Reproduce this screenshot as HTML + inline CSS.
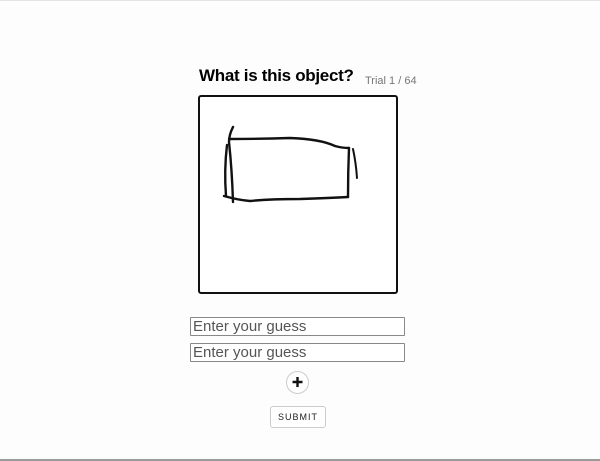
<!DOCTYPE html>
<html><head><meta charset="utf-8"><style>
html,body{margin:0;padding:0;}
body{width:600px;height:461px;background:#fdfdfd;position:relative;overflow:hidden;font-family:"Liberation Sans",sans-serif;}
.top{position:absolute;left:0;top:0;width:600px;height:1px;background:#e4e4e4;}
.bot{position:absolute;left:0;top:459px;width:600px;height:2px;background:#9a9a9a;}
h1{position:absolute;left:199px;top:66px;margin:0;font-size:17px;font-weight:bold;color:#000;letter-spacing:-0.3px;white-space:nowrap;}
.trial{position:absolute;left:365px;top:75px;font-size:11px;color:#777;white-space:nowrap;}
.canvas{position:absolute;left:198px;top:95px;width:196px;height:195px;border:2px solid #111;border-radius:3px;background:#fff;}
svg{position:absolute;left:0;top:0;}
.inp{position:absolute;left:190px;width:211px;height:17px;border:1px solid #888;border-radius:1px;background:#fff;font-size:15px;color:#555;line-height:17px;padding-left:2px;white-space:nowrap;}
.plus{position:absolute;left:286px;top:371px;width:21px;height:21px;border:1px solid #ccc;border-radius:50%;background:#fff;}
.sub{position:absolute;left:270px;top:406px;width:54px;height:20px;border:1px solid #ccc;border-radius:3px;background:#fff;font-size:9px;letter-spacing:1px;text-align:center;line-height:20px;color:#222;}
</style></head><body>
<div class="top"></div>
<h1>What is this object?</h1>
<div class="trial">Trial 1 / 64</div>
<div class="canvas"></div>
<svg width="600" height="461" fill="none" stroke="#111" stroke-width="2.4" stroke-linecap="round" stroke-linejoin="round">
<path d="M233 127 Q229 135 229 142 Q232 170 233 202"/>
<path d="M227 145 Q224 170 226 196"/>
<path d="M229 139 Q260 139 290 138 Q320 139 335 146 Q342 148 349 148"/>
<path d="M349 148 Q348 172 348 197"/>
<path d="M224 196 Q238 200 250 201 Q270 199 300 199 Q330 198 348 197"/>
<path d="M353 149 Q356 163 357 178" stroke-width="2"/>
</svg>
<div class="inp" style="top:317px">Enter your guess</div>
<div class="inp" style="top:343px">Enter your guess</div>
<div class="plus"></div>
<svg width="600" height="461" fill="none" stroke="#111" stroke-width="2.4"><path d="M292.5 382 H302.5 M297.5 377 V387"/></svg>
<div class="sub">SUBMIT</div>
<div class="bot"></div>
</body></html>
